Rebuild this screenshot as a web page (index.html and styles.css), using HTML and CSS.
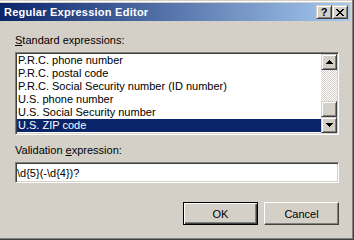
FILE: index.html
```html
<!DOCTYPE html>
<html lang="en">
<head>
    <meta charset="UTF-8">
    <title>Regular Expression Editor</title>
    <link rel="stylesheet" href="styles.css">
</head>
<body>
    <div class="window">
        <div class="titlebar">
            <span class="title">Regular Expression Editor</span>
            <div class="caption-buttons">
                <span class="cap-btn help">?</span>
                <span class="cap-btn">
                    <svg width="8" height="7" viewBox="0 0 8 7">
                        <path d="M0 0h2v1h1v1h2v-1h1v-1h2v1h-1v1h-1v1h-1v1h1v1h1v1h1v1h-2v-1h-1v-1h-2v1h-1v1h-2v-1h1v-1h1v-1h1v-1h-1v-1h-1v-1h-1z" fill="#000"/>
                    </svg>
                </span>
            </div>
        </div>

        <div class="content">
            <label class="field-label"><u>S</u>tandard expressions:</label>
            <div class="listbox">
                <ul class="items">
                    <li>P.R.C. phone number</li>
                    <li>P.R.C. postal code</li>
                    <li>P.R.C. Social Security number (ID number)</li>
                    <li>U.S. phone number</li>
                    <li>U.S. Social Security number</li>
                    <li class="selected">U.S. ZIP code</li>
                </ul>
                <div class="scrollbar">
                    <div class="sb-btn">
                        <svg width="7" height="4" viewBox="0 0 7 4"><path d="M3 0h1v1h1v1h1v1h1v1h-7v-1h1v-1h1v-1h1z" fill="#000"/></svg>
                    </div>
                    <div class="sb-track"></div>
                    <div class="sb-btn thumb"></div>
                    <div class="sb-btn">
                        <svg width="7" height="4" viewBox="0 0 7 4"><path d="M0 0h7v1h-1v1h-1v1h-1v1h-1v-1h-1v-1h-1v-1h-1z" fill="#000"/></svg>
                    </div>
                </div>
            </div>

            <label class="field-label second">Validation <u>e</u>xpression:</label>
            <input class="textbox" type="text" value="\d{5}(-\d{4})?">

            <div class="actions">
                <button class="btn default">OK</button>
                <button class="btn">Cancel</button>
            </div>
        </div>
    </div>
</body>
</html>
```

FILE: styles.css
```css
body {
    margin: 0;
    padding: 0;
    font-family: 'Liberation Sans', Arial, sans-serif;
    font-size: 11px;
    color: #000;
    background-color: #d4d0c8;
}
.window {
    width: 354px;
    height: 240px;
    box-sizing: border-box;
    padding: 3px 4px 4px 0;
    background-color: #d4d0c8;
    box-shadow: inset -1px -1px #404040, inset -2px -2px #808080, inset 0 1px #d4d0c8, inset 0 2px #fff;
}
.titlebar {
    height: 18px;
    display: flex;
    align-items: center;
    justify-content: space-between;
    padding: 0 2px 0 4px;
    background: linear-gradient(to right, #0a246a, #a6caf0);
}
.title {
    color: #fff;
    font-weight: bold;
    font-size: 11px;
    letter-spacing: 0.25px;
}
.caption-buttons {
    display: flex;
}
.cap-btn {
    width: 16px;
    height: 14px;
    box-sizing: border-box;
    display: flex;
    align-items: center;
    justify-content: center;
    background-color: #d4d0c8;
    border: 1px solid;
    border-color: #d4d0c8 #404040 #404040 #d4d0c8;
    box-shadow: inset 1px 1px #fff, inset -1px -1px #808080;
}
.cap-btn.help {
    font-weight: bold;
    font-size: 11px;
    line-height: 12px;
}
.content {
    padding: 13px 0 0 15px;
    width: 324px;
}
.field-label {
    display: block;
    height: 13px;
    line-height: 13px;
    margin-bottom: 5px;
}
.field-label.second {
    margin-top: 9px;
}
.listbox {
    height: 83px;
    box-sizing: border-box;
    display: flex;
    background-color: #fff;
    border: 1px solid;
    border-color: #808080 #fff #fff #808080;
    box-shadow: inset 1px 1px #404040, inset -1px -1px #d4d0c8;
    padding: 1px;
}
.items {
    list-style: none;
    margin: 0;
    padding: 0;
    flex: 1;
}
.items li {
    height: 13px;
    line-height: 13px;
    padding-left: 1px;
    white-space: nowrap;
}
.items li.selected {
    background-color: #0a246a;
    color: #fff;
}
.scrollbar {
    width: 16px;
    display: flex;
    flex-direction: column;
}
.sb-btn {
    height: 16px;
    box-sizing: border-box;
    display: flex;
    align-items: center;
    justify-content: center;
    background-color: #d4d0c8;
    border: 1px solid;
    border-color: #d4d0c8 #404040 #404040 #d4d0c8;
    box-shadow: inset 1px 1px #fff, inset -1px -1px #808080;
}
.sb-track {
    flex: 1;
    background-color: #fff;
    background-image: repeating-conic-gradient(#d4d0c8 0 25%, #fff 0 50%);
    background-size: 2px 2px;
}
.textbox {
    display: block;
    width: 100%;
    height: 21px;
    box-sizing: border-box;
    margin: 0;
    padding: 0 1px;
    font-family: 'Liberation Sans', Arial, sans-serif;
    font-size: 11px;
    color: #000;
    background-color: #fff;
    border: 1px solid;
    border-color: #808080 #fff #fff #808080;
    box-shadow: inset 1px 1px #404040, inset -1px -1px #d4d0c8;
    outline: none;
}
.actions {
    display: flex;
    justify-content: flex-end;
    gap: 6px;
    margin-top: 19px;
}
.btn {
    width: 75px;
    height: 23px;
    box-sizing: border-box;
    margin: 0;
    padding: 0;
    font-family: 'Liberation Sans', Arial, sans-serif;
    font-size: 11px;
    color: #000;
    background-color: #d4d0c8;
    border: 1px solid;
    border-color: #fff #404040 #404040 #fff;
    box-shadow: inset -1px -1px #808080;
}
.btn.default {
    border-color: #000;
    box-shadow: inset 1px 1px #fff, inset -1px -1px #404040, inset -2px -2px #808080;
}
```
